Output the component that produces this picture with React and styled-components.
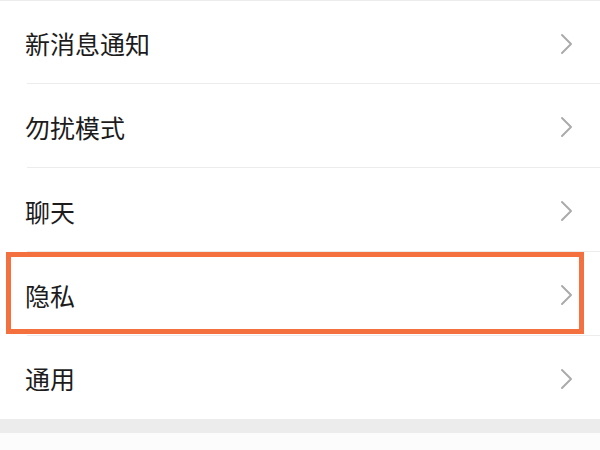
import React from 'react';
import styled, { createGlobalStyle } from 'styled-components';

const GlobalStyle = createGlobalStyle`
  html, body {
    margin: 0;
    padding: 0;
    background: #ffffff;
  }
  body {
    font-family: "Noto Sans CJK SC", "Noto Sans", sans-serif;
  }
`;

const Page = styled.div`
  width: 600px;
  height: 450px;
  overflow: hidden;
  background: #ffffff;
  display: flex;
  flex-direction: column;
  border-top: 1px solid #ececec;
  box-sizing: border-box;
`;

const List = styled.div`
  display: flex;
  flex-direction: column;
`;

const Row = styled.div`
  position: relative;
  height: ${(p) => (p.first || p.last ? 83 : 84)}px;
  flex-shrink: 0;
  display: flex;
  align-items: center;
  justify-content: space-between;
  padding: 2px 27px 0 25px;
  box-sizing: border-box;
  &::after {
    content: '';
    display: ${(p) => (p.last ? 'none' : 'block')};
    position: absolute;
    left: 27px;
    right: 0;
    bottom: 0;
    height: 1px;
    background: #ececec;
  }
`;

const Label = styled.span`
  font-size: 25px;
  line-height: 1;
  color: #1c1c1c;
`;

const Highlight = styled.div`
  position: absolute;
  left: 6px;
  top: 0;
  width: 578px;
  height: 82px;
  border: 5px solid #f4703f;
  box-sizing: border-box;
  pointer-events: none;
`;

const Chevron = () => (
  <svg width="13" height="22" viewBox="0 0 13 22">
    <path d="M2 2 L11 11 L2 20" fill="none" stroke="#ababab" strokeWidth="2" strokeLinecap="round" strokeLinejoin="round" />
  </svg>
);

const Band = styled.div`
  height: 14px;
  flex-shrink: 0;
  background: #ececec;
`;

const Footer = styled.div`
  flex: 1;
  background: #fcfcfc;
`;

const items = ['新消息通知', '勿扰模式', '聊天', '隐私', '通用'];

export default function App() {
  return (
    <>
      <GlobalStyle />
      <Page>
        <List>
          {items.map((text, i) => (
            <Row key={text} first={i === 0} last={i === items.length - 1}>
              <Label>{text}</Label>
              <Chevron />
              {text === '隐私' && <Highlight />}
            </Row>
          ))}
        </List>
        <Band />
        <Footer />
      </Page>
    </>
  );
}
